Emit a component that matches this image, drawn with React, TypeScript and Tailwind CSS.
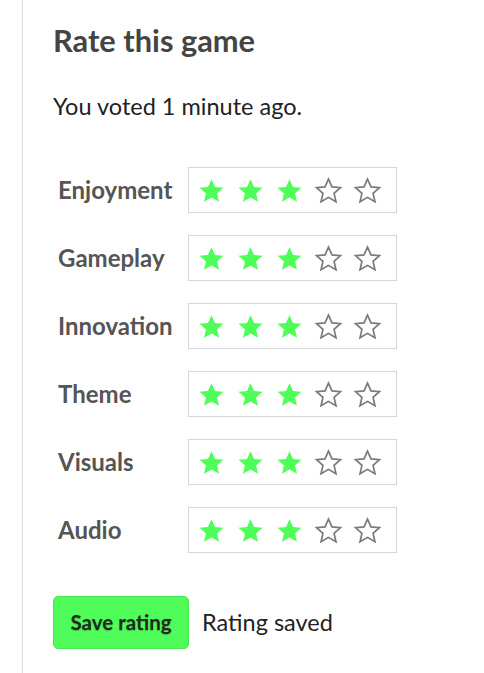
import { useState } from 'react'

const CRITERIA = ['Enjoyment', 'Gameplay', 'Innovation', 'Theme', 'Visuals', 'Audio']

function Star({ filled }: { filled: boolean }) {
  return (
    <svg viewBox="0 0 24 24" className="w-[29px] h-[29px]">
      <path
        d="M12 2.6l2.9 6.4 7 .7-5.3 4.7 1.6 6.9L12 17.7l-6.2 3.6 1.6-6.9L2.1 9.7l7-.7z"
        fill={filled ? '#4dff57' : 'none'}
        stroke={filled ? 'none' : '#7a7a7a'}
        strokeWidth={filled ? 0 : 1.4}
        strokeLinejoin="miter"
      />
    </svg>
  )
}

function StarRow({ value }: { value: number }) {
  return (
    <div className="flex items-center w-[209px] h-[46px] pl-[3px] border border-[#d6d6d6] bg-white">
      {[1, 2, 3, 4, 5].map((n) => (
        <span key={n} className="w-[39px] flex justify-center">
          <Star filled={n <= value} />
        </span>
      ))}
    </div>
  )
}

export default function App() {
  const [ratings] = useState<number[]>(CRITERIA.map(() => 3))

  return (
    <div
      className="min-h-[673px] bg-white"
      style={{ fontFamily: 'Lato, "Noto Sans", sans-serif' }}
    >
      <div className="ml-[22px] border-l border-[#dddddd] min-h-[673px] pl-[30px] pt-[23px]">
        {/* Heading */}
        <h2 className="text-[30.8px] font-bold text-[#444] leading-[36px]">Rate this game</h2>

        <p className="mt-[33px] text-[23.5px] text-[#222] leading-[28px]">You voted 1 minute ago.</p>

        {/* Criteria */}
        <div className="mt-[47px] flex flex-col gap-[22px]">
          {CRITERIA.map((name, i) => (
            <div key={name} className="flex items-center">
              <span className="w-[135px] pl-[5px] text-[24px] font-bold text-[#555]">{name}</span>
              <StarRow value={ratings[i]} />
            </div>
          ))}
        </div>

        {/* Save */}
        <div className="mt-[43px] flex items-center gap-[13px]">
          <button className="w-[136px] h-[53px] rounded-[5px] bg-[#50fc5a] border border-[#46e750] text-[20.5px] font-bold text-[#1e2a1e] [text-shadow:0_1px_1px_rgba(0,0,0,0.25)]">
            Save rating
          </button>
          <span className="text-[23.5px] text-[#222]">Rating saved</span>
        </div>
      </div>
    </div>
  )
}
